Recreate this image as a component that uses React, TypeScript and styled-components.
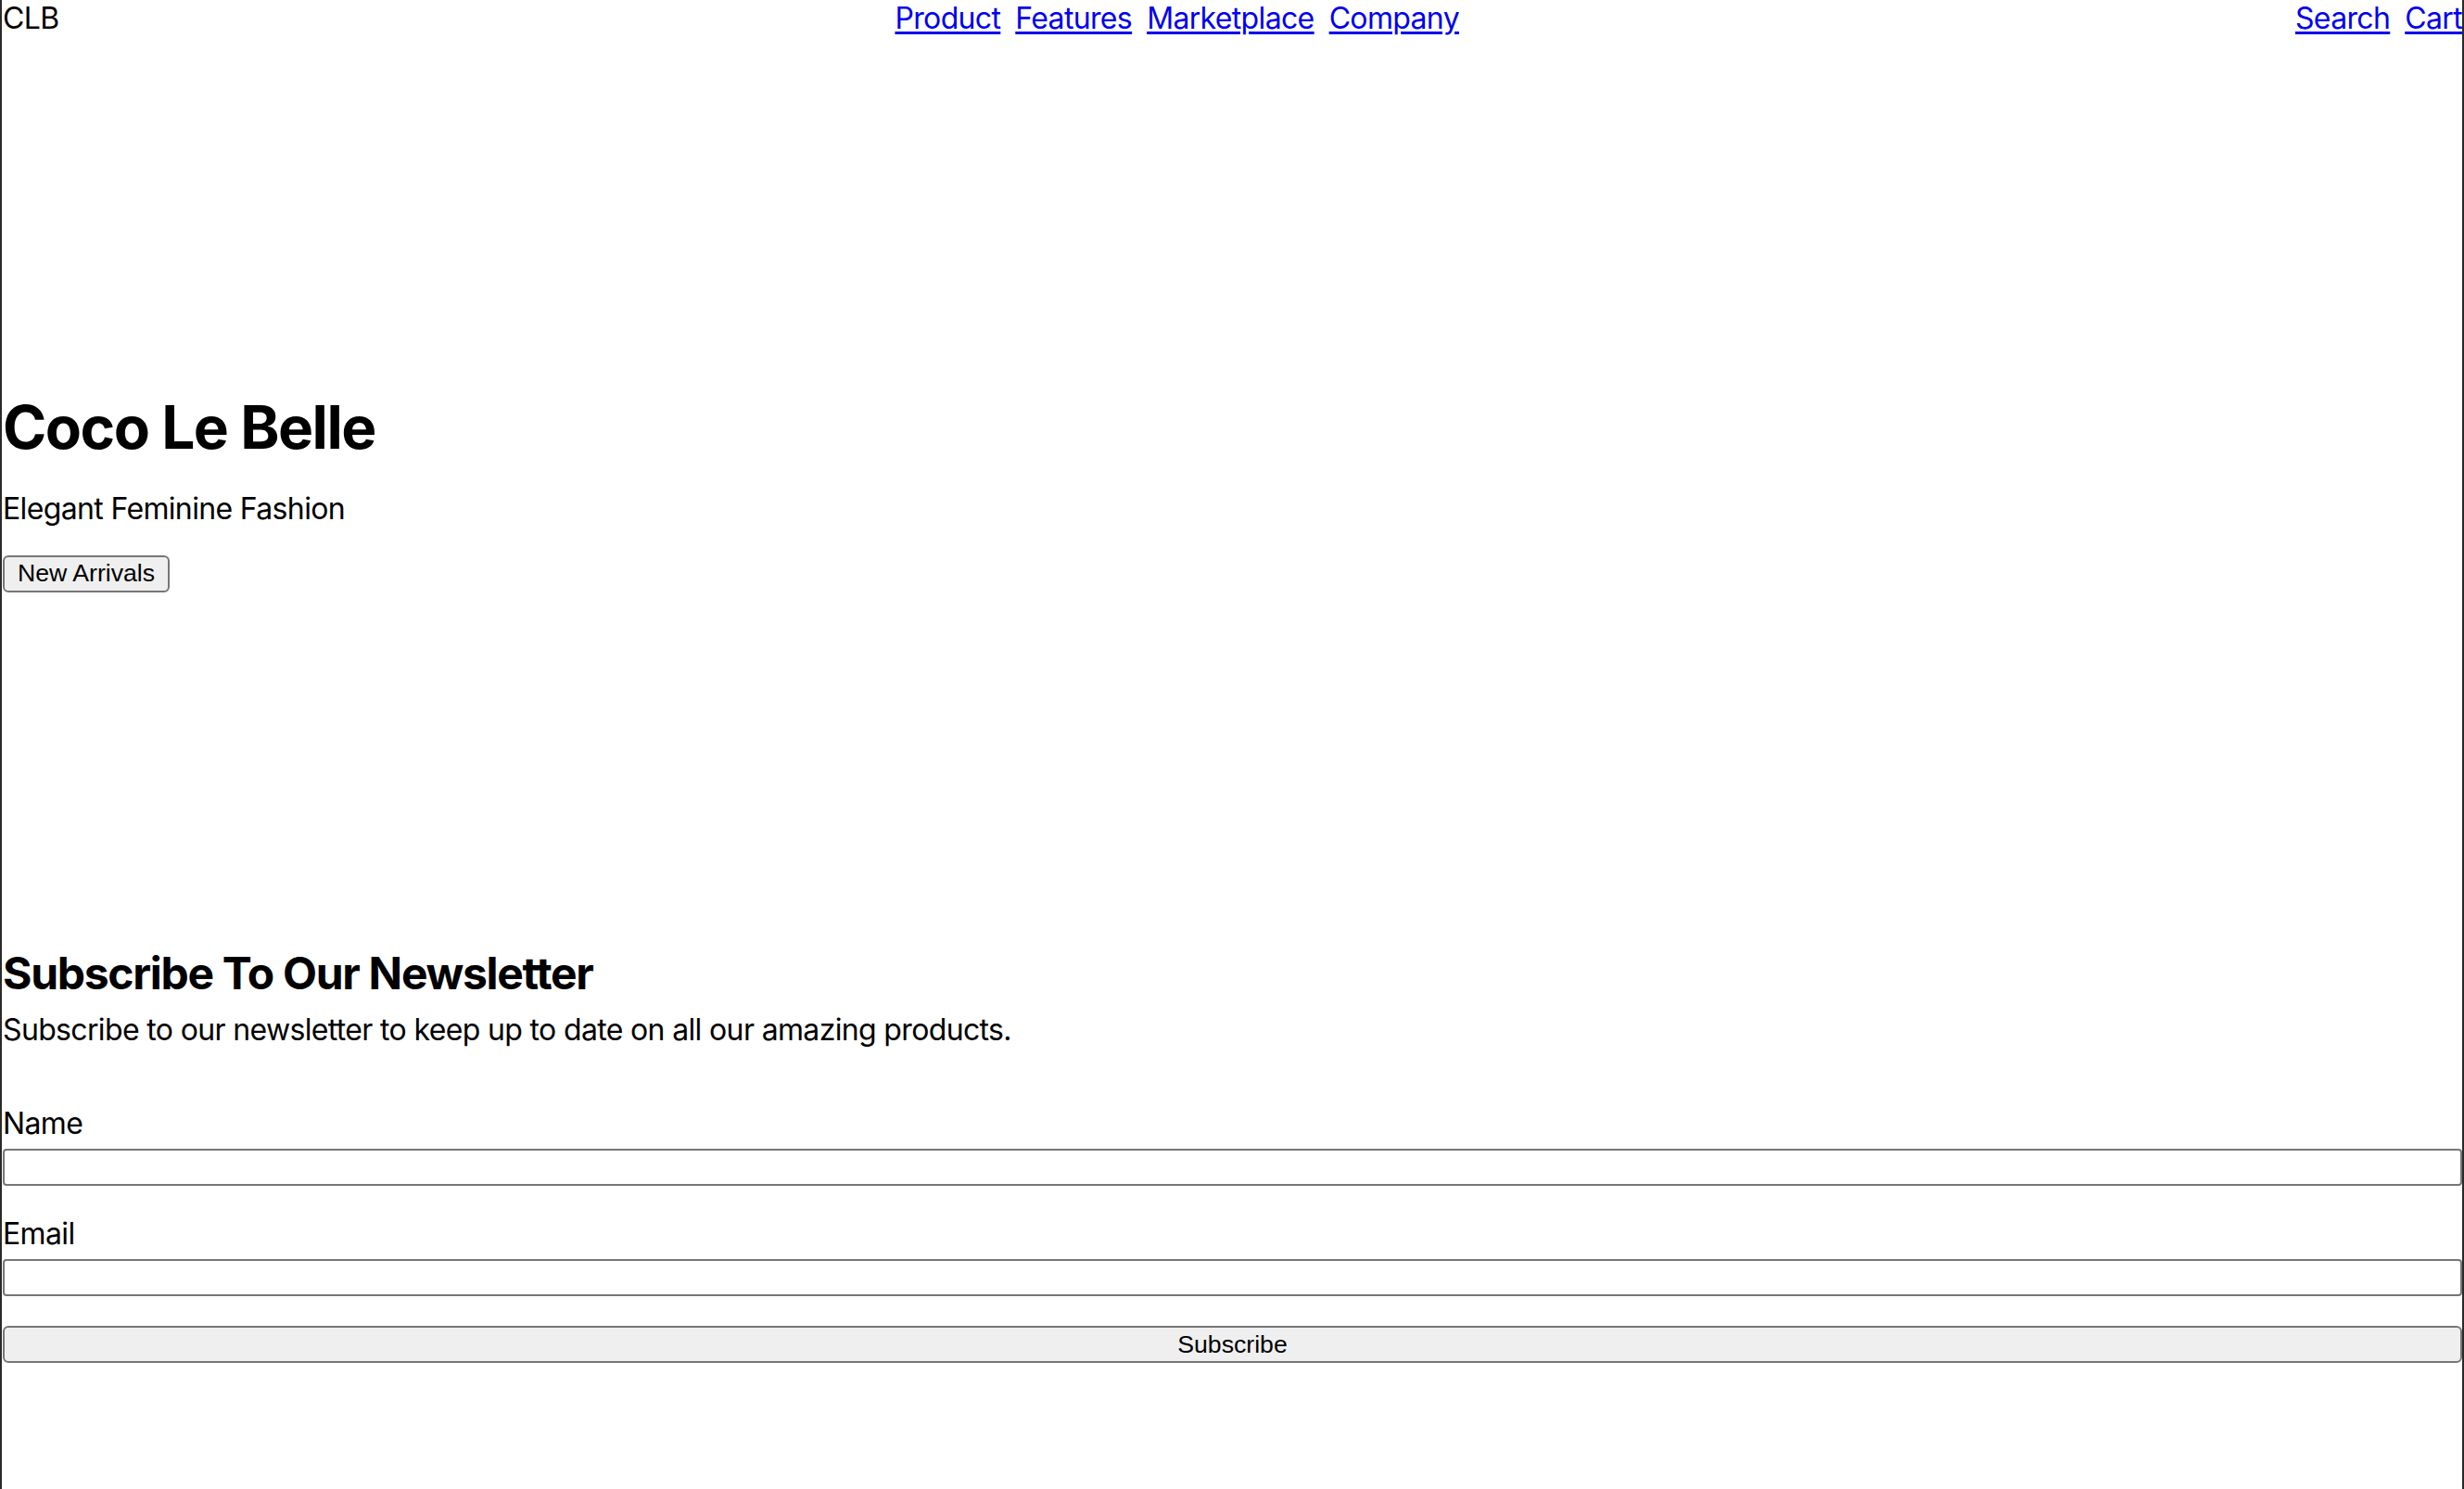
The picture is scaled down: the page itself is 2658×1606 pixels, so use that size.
import React from 'react';
import styled, { createGlobalStyle } from 'styled-components';

const GlobalStyle = createGlobalStyle`
  html, body {
    margin: 0;
    padding: 0;
    background: #ffffff;
  }
  body {
    font-family: Inter, 'Noto Sans', sans-serif;
    font-size: 32px;
    letter-spacing: -0.65px;
    color: #000000;
  }
  * {
    box-sizing: border-box;
  }
`;

const Page = styled.div`
  min-height: 100vh;
  border-left: 2px solid #2a2a2a;
  border-right: 2px solid #2a2a2a;
  padding-left: 1px;
`;

const NavBar = styled.header`
  display: flex;
  justify-content: space-between;
  align-items: center;
  line-height: 39px;
`;

const Brand = styled.div`
  font-size: 32px;
`;

const NavLinks = styled.nav`
  display: flex;
  gap: 16px;
`;

const NavLink = styled.a`
  color: #0000ee;
  text-decoration: underline;
  text-underline-offset: 3px;
  font-size: 32px;
  cursor: pointer;
`;

const Hero = styled.section`
  height: 982px;
  display: flex;
  flex-direction: column;
  justify-content: center;
  align-items: flex-start;
`;

const HeroTitle = styled.h1`
  margin: 0 0 30px;
  font-size: 64px;
  font-weight: 700;
  line-height: 77px;
  letter-spacing: -1.5px;
`;

const HeroTagline = styled.p`
  margin: 0 0 31px;
  font-size: 32px;
  line-height: 39px;
`;

const NativeButton = styled.button<{ $block?: boolean }>`
  font-family: 'Liberation Sans', Arial, sans-serif;
  font-size: 26.67px;
  letter-spacing: 0;
  color: #000000;
  background: #efefef;
  border: 2px solid #767676;
  border-radius: 6px;
  height: 40px;
  padding: 0 ${props => (props.$block ? '0' : '14px')};
  width: ${props => (props.$block ? '100%' : 'auto')};
  display: block;
  cursor: pointer;
`;

const Newsletter = styled.section`
  display: flex;
  flex-direction: column;
`;

const SectionTitle = styled.h2`
  margin: 0 0 12px;
  font-size: 48px;
  font-weight: 700;
  line-height: 58px;
  letter-spacing: -1.3px;
`;

const SectionText = styled.p`
  margin: 0 0 62px;
  font-size: 32px;
  line-height: 39px;
`;

const Form = styled.form`
  display: flex;
  flex-direction: column;
`;

const Field = styled.div`
  display: flex;
  flex-direction: column;
  gap: 8px;
  margin-bottom: 32px;
`;

const Label = styled.label`
  font-size: 32px;
  line-height: 39px;
`;

const TextInput = styled.input`
  height: 40px;
  width: 100%;
  border: 2px solid #767676;
  border-radius: 4px;
  background: #ffffff;
  font-size: 26px;
  padding: 0 4px;
`;

const fields = [
  { id: 'name', label: 'Name', type: 'text' },
  { id: 'email', label: 'Email', type: 'email' },
];

export default function App() {
  return (
    <>
      <GlobalStyle />
      <Page>
        <NavBar>
          <Brand>CLB</Brand>
          <NavLinks>
            <NavLink href="#">Product</NavLink>
            <NavLink href="#">Features</NavLink>
            <NavLink href="#">Marketplace</NavLink>
            <NavLink href="#">Company</NavLink>
          </NavLinks>
          <NavLinks>
            <NavLink href="#">Search</NavLink>
            <NavLink href="#">Cart</NavLink>
          </NavLinks>
        </NavBar>

        <Hero>
          <HeroTitle>Coco Le Belle</HeroTitle>
          <HeroTagline>Elegant Feminine Fashion</HeroTagline>
          <NativeButton type="button">New Arrivals</NativeButton>
        </Hero>

        <Newsletter>
          <SectionTitle>Subscribe To Our Newsletter</SectionTitle>
          <SectionText>Subscribe to our newsletter to keep up to date on all our amazing products.</SectionText>
          <Form onSubmit={e => e.preventDefault()}>
            {fields.map(f => (
              <Field key={f.id}>
                <Label htmlFor={f.id}>{f.label}</Label>
                <TextInput id={f.id} type={f.type} />
              </Field>
            ))}
            <NativeButton type="submit" $block>Subscribe</NativeButton>
          </Form>
        </Newsletter>
      </Page>
    </>
  );
}
